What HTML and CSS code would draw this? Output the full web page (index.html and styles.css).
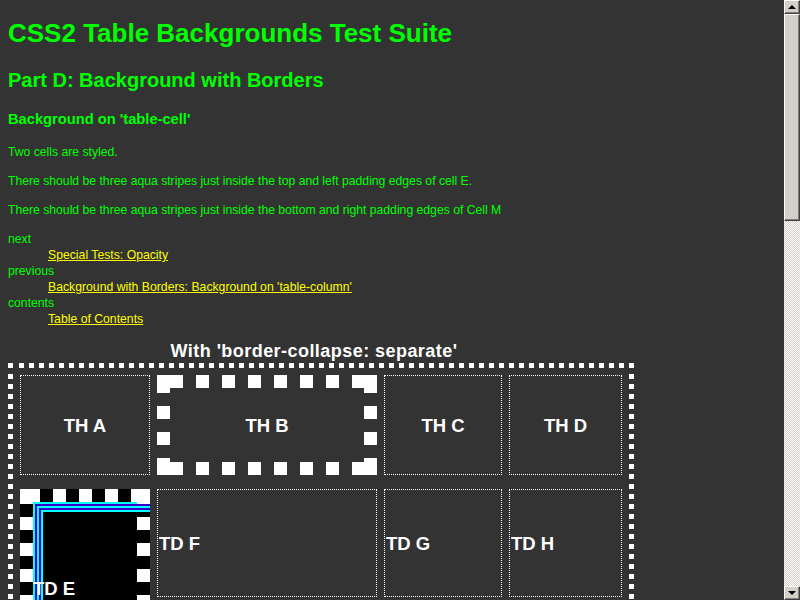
FILE: index.html
```html
<!DOCTYPE html>
<html lang="en">
<head>
<meta charset="utf-8">
<title>CSS2 Table Backgrounds Test Suite</title>
<link rel="stylesheet" href="styles.css">
</head>
<body>
<div class="viewport">
  <h1>CSS2 Table Backgrounds Test Suite</h1>
  <h2>Part D: Background with Borders</h2>
  <h3>Background on 'table-cell'</h3>
  <p class="first">Two cells are styled.</p>
  <p>There should be three aqua stripes just inside the top and left padding edges of cell E.</p>
  <p>There should be three aqua stripes just inside the bottom and right padding edges of Cell M</p>
  <dl>
    <dt>next</dt>
    <dd><a href="#">Special Tests: Opacity</a></dd>
    <dt>previous</dt>
    <dd><a href="#">Background with Borders: Background on 'table-column'</a></dd>
    <dt>contents</dt>
    <dd><a href="#">Table of Contents</a></dd>
  </dl>
  <div class="table">
    <div class="caption">With 'border-collapse: separate'</div>
    <div class="grid">
      <div class="cell th">TH A</div>
      <div class="cell th dashed">TH B</div>
      <div class="cell th">TH C</div>
      <div class="cell th">TH D</div>
      <div class="cell-e">TD E</div>
      <div class="cell">TD F</div>
      <div class="cell">TD G</div>
      <div class="cell">TD H</div>
    </div>
  </div>
</div>
<div class="scrollbar">
  <div class="sb-btn"><span class="arrow-up"></span></div>
  <div class="sb-thumb"></div>
  <div class="sb-track"></div>
  <div class="sb-btn"><span class="arrow-down"></span></div>
</div>
</body>
</html>
```
FILE: styles.css
```css
html, body {
  margin: 0;
  padding: 0;
}
body {
  background: #333333;
  height: 600px;
  overflow: hidden;
  display: flex;
  font-family: "Liberation Sans", Arial, sans-serif;
  color: #00ff00;
}
.viewport {
  width: 784px;
  flex: none;
  display: flex;
  flex-direction: column;
  align-items: flex-start;
  padding: 18px 8px 0;
  box-sizing: border-box;
  overflow: hidden;
}
h1 {
  margin: 0;
  font-size: 26px;
  line-height: 30px;
  font-weight: bold;
}
h2 {
  margin: 21px 0 0;
  font-size: 20px;
  line-height: 22px;
  font-weight: bold;
}
h3 {
  margin: 19px 0 0;
  font-size: 14.7px;
  line-height: 18px;
  font-weight: bold;
}
p {
  margin: 13px 0 0;
  font-size: 12.2px;
  line-height: 16px;
}
p.first {
  margin-top: 16px;
}
dl {
  margin: 13px 0 0;
  font-size: 12.2px;
  line-height: 16px;
}
dt {
  margin: 0;
}
dd {
  margin: 0 0 0 40px;
}
dd a {
  letter-spacing: 0.02px;
}
a {
  color: #ffff00;
  text-decoration: underline;
}
.table {
  margin-top: 14px;
  display: flex;
  flex-direction: column;
  width: max-content;
}
.caption {
  font-size: 18px;
  line-height: 20px;
  font-weight: bold;
  letter-spacing: 0.45px;
  color: #ffffff;
  text-align: center;
  padding-right: 14px;
  margin-bottom: 2px;
}
.grid {
  display: grid;
  grid-template-columns: 130px 220px 118px 113px;
  grid-template-rows: 100px 108px 76px;
  column-gap: 7px;
  row-gap: 14px;
  padding: 7px;
  border: 5px solid transparent;
  background:
    linear-gradient(#fff, #fff) 0 0 / 5px 5px no-repeat border-box,
    linear-gradient(#fff, #fff) 100% 0 / 5px 5px no-repeat border-box,
    linear-gradient(#fff, #fff) 0 100% / 5px 5px no-repeat border-box,
    linear-gradient(#fff, #fff) 100% 100% / 5px 5px no-repeat border-box,
    repeating-linear-gradient(90deg, #fff 0 5px, transparent 5px 10px) 11px 0 / 605px 5px no-repeat border-box,
    repeating-linear-gradient(90deg, #fff 0 5px, transparent 5px 10px) 11px 100% / 605px 5px no-repeat border-box,
    repeating-linear-gradient(180deg, #fff 0 5px, transparent 5px 10px) 0 11px / 5px calc(100% - 21px) no-repeat border-box,
    repeating-linear-gradient(180deg, #fff 0 5px, transparent 5px 10px) 100% 11px / 5px calc(100% - 21px) no-repeat border-box;
}
.cell {
  border: 1px dotted #ffffff;
  padding: 1px;
  display: flex;
  align-items: center;
  font-size: 18.5px;
  line-height: 21px;
  font-weight: bold;
  color: #ffffff;
  min-width: 0;
}
.th {
  justify-content: center;
}
.dashed {
  border: 13px solid transparent;
  padding: 0;
  background:
    linear-gradient(#fff, #fff) 0 0 / 13px 18px no-repeat border-box,
    linear-gradient(#fff, #fff) 100% 0 / 13px 18px no-repeat border-box,
    linear-gradient(#fff, #fff) 0 100% / 13px 17px no-repeat border-box,
    linear-gradient(#fff, #fff) 100% 100% / 13px 17px no-repeat border-box,
    repeating-linear-gradient(90deg, transparent 0 13px, #fff 13px 26px) 0 0 / 208px 13px no-repeat border-box,
    repeating-linear-gradient(90deg, transparent 0 13px, #fff 13px 26px) 0 100% / 208px 13px no-repeat border-box,
    repeating-linear-gradient(180deg, transparent 0 5px, #fff 5px 18px, transparent 18px 26px) 0 0 / 13px 96px no-repeat border-box,
    repeating-linear-gradient(180deg, transparent 0 5px, #fff 5px 18px, transparent 18px 26px) 100% 0 / 13px 96px no-repeat border-box;
}
.cell-e {
  grid-row: span 2;
  border: 13px solid transparent;
  display: flex;
  align-items: center;
  font-size: 18.5px;
  line-height: 21px;
  font-weight: bold;
  color: #ffffff;
  background-color: #ffffff;
  background-image:
    linear-gradient(#0ff, #0ff),
    linear-gradient(#30c, #30c),
    linear-gradient(#0ff, #0ff),
    linear-gradient(#30c, #30c),
    linear-gradient(#0ff, #0ff),
    linear-gradient(#0ff, #0ff),
    linear-gradient(#30c, #30c),
    linear-gradient(#0ff, #0ff),
    linear-gradient(#30c, #30c),
    linear-gradient(#0ff, #0ff),
    linear-gradient(#000, #000),
    repeating-linear-gradient(90deg, #000 0 13px, transparent 13px 26px),
    repeating-linear-gradient(90deg, #000 0 13px, transparent 13px 26px),
    repeating-linear-gradient(180deg, #000 0 13px, transparent 13px 26px),
    repeating-linear-gradient(180deg, #000 0 13px, transparent 13px 26px);
  background-position:
    13px 13px, 15px 15px, 17px 17px, 19px 19px, 21px 21px,
    13px 13px, 15px 15px, 17px 17px, 19px 19px, 21px 21px,
    13px 13px,
    20px 0, 20px 100%,
    0 15px, 100% 15px;
  background-size:
    104px 2px, 115px 2px, 113px 2px, 111px 2px, 109px 2px,
    2px calc(100% - 13px), 2px calc(100% - 15px), 2px calc(100% - 17px), 2px calc(100% - 19px), 2px calc(100% - 21px),
    104px calc(100% - 26px),
    91px 13px, 91px 13px,
    13px calc(100% - 30px), 13px calc(100% - 30px);
  background-repeat: no-repeat;
  background-origin: border-box;
  background-clip: border-box;
}
.scrollbar {
  width: 16px;
  flex: none;
  height: 600px;
  display: flex;
  flex-direction: column;
  background: repeating-conic-gradient(#d4d0c8 0 25%, #ffffff 0 50%) 0 0 / 2px 2px;
}
.sb-btn,
.sb-thumb {
  box-sizing: border-box;
  background: #d4d0c8;
  border: 1px solid;
  border-color: #ffffff #404040 #404040 #ffffff;
  box-shadow: inset -1px -1px 0 #808080;
}
.sb-btn {
  height: 14px;
  flex: none;
  display: flex;
  align-items: center;
  justify-content: center;
}
.sb-thumb {
  height: 207px;
  flex: none;
}
.sb-track {
  flex: 1;
}
.arrow-up {
  width: 0;
  height: 0;
  border-left: 4px solid transparent;
  border-right: 4px solid transparent;
  border-bottom: 4px solid #000;
}
.arrow-down {
  width: 0;
  height: 0;
  border-left: 4px solid transparent;
  border-right: 4px solid transparent;
  border-top: 4px solid #000;
}
```
